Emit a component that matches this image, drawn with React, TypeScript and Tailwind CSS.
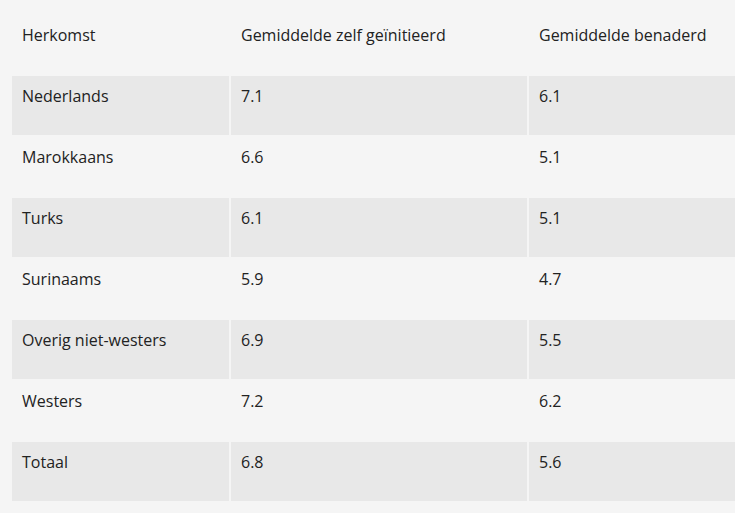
const rows: [string, string, string][] = [
  ['Nederlands', '7.1', '6.1'],
  ['Marokkaans', '6.6', '5.1'],
  ['Turks', '6.1', '5.1'],
  ['Surinaams', '5.9', '4.7'],
  ['Overig niet-westers', '6.9', '5.5'],
  ['Westers', '7.2', '6.2'],
  ['Totaal', '6.8', '5.6'],
]

const cell = 'h-[59px] px-[10px] pt-[8px] align-top text-left font-normal'

export default function App() {
  return (
    <div
      className="min-h-[513px] w-full overflow-hidden bg-[#f5f5f5] pt-[13px] pl-[10px] text-[16px] leading-6 text-[#222]"
      style={{ fontFamily: '"Open Sans", "Noto Sans", sans-serif' }}
    >
      <table className="w-[820px] table-fixed border-separate border-spacing-[2px]">
        <colgroup>
          <col className="w-[217px]" />
          <col className="w-[296px]" />
          <col />
        </colgroup>
        <thead>
          <tr>
            <th className={cell}>Herkomst</th>
            <th className={cell}>Gemiddelde zelf geïnitieerd</th>
            <th className={cell}>Gemiddelde benaderd</th>
          </tr>
        </thead>
        <tbody>
          {rows.map(([name, zelf, benaderd], i) => (
            <tr key={name}>
              {[name, zelf, benaderd].map((v, j) => (
                <td key={j} className={`${cell} ${i % 2 === 0 ? 'bg-[#e8e8e8]' : ''}`}>
                  {v}
                </td>
              ))}
            </tr>
          ))}
        </tbody>
      </table>
    </div>
  )
}
